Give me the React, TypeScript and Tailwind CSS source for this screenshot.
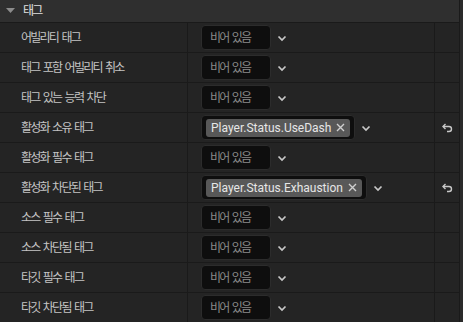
import React from 'react';

const FONT = { fontFamily: 'Roboto, "Noto Sans CJK KR", sans-serif' };

const ROWS: { label: string; tag?: string }[] = [
  { label: '어빌리티 태그' },
  { label: '태그 포함 어빌리티 취소' },
  { label: '태그 있는 능력 차단' },
  { label: '활성화 소유 태그', tag: 'Player.Status.UseDash' },
  { label: '활성화 필수 태그' },
  { label: '활성화 차단된 태그', tag: 'Player.Status.Exhaustion' },
  { label: '소스 필수 태그' },
  { label: '소스 차단됨 태그' },
  { label: '타깃 필수 태그' },
  { label: '타깃 차단됨 태그' },
];

// korean text in the editor is packed tighter than Noto's default advance
const KO = 'text-[12px] tracking-[-1.75px] [word-spacing:2px]';

const Chevron = () => (
  <svg width="10" height="8" viewBox="0 0 10 8" className="shrink-0 text-[#c8c8c8]">
    <path d="M1.5 2.5 L5 6 L8.5 2.5" fill="none" stroke="currentColor" strokeWidth="1.7" />
  </svg>
);

const Cross = () => (
  <svg width="9" height="9" viewBox="0 0 9 9" className="shrink-0 text-[#d0d0d0]">
    <path d="M1 1 L8 8 M8 1 L1 8" fill="none" stroke="currentColor" strokeWidth="1.4" />
  </svg>
);

const Undo = () => (
  <svg width="11" height="10" viewBox="0 0 11 10" className="text-[#c8c8c8]">
    <path d="M3.5 1 L1 3.5 L3.5 6" fill="none" stroke="currentColor" strokeWidth="1.4" />
    <path d="M1.5 3.5 H7 A2.5 2.5 0 0 1 7 8.5 H5" fill="none" stroke="currentColor" strokeWidth="1.4" />
  </svg>
);

const Row: React.FC<{ label: string; tag?: string }> = ({ label, tag }) => (
  <div className="flex h-[30px] border-t border-[#1a1a1a]">
    <div className="flex w-[188px] shrink-0 items-center border-r border-[#1a1a1a] pl-[21px]">
      <span className={`${KO} text-[#c4c4c4]`}>{label}</span>
    </div>
    <div className="flex flex-1 items-center gap-[6px] border-r border-[#1a1a1a] pl-[13px]">
      {tag ? (
        <div className="flex h-[25px] items-center rounded-[4px] border border-[#2c2c2c] bg-[#0e0e0e] px-[4px]">
          <div className="flex h-[18px] items-center gap-[5px] rounded-[3px] bg-[#585858] pl-[5px] pr-[5px]">
            <span className="text-[12px] text-[#e6e6e6]">{tag}</span>
            <Cross />
          </div>
        </div>
      ) : (
        <div className="flex h-[25px] w-[70px] items-center rounded-[4px] border border-[#2c2c2c] bg-[#0e0e0e] pl-[8px]">
          <span className={`${KO} text-[#8a8a8a]`}>비어 있음</span>
        </div>
      )}
      <Chevron />
    </div>
    <div className="flex w-[24px] shrink-0 items-center justify-center">{tag && <Undo />}</div>
  </div>
);

export default function App() {
  return (
    <div className="flex h-[322px] w-[463px] overflow-hidden bg-[#242424]" style={FONT}>
      <div className="flex w-[459px] flex-col">
        <div className="flex h-[22px] shrink-0 items-center gap-[8px] bg-[#2f2f2f] pl-[6px]">
          <svg width="9" height="6" viewBox="0 0 9 6" className="text-[#8c8c8c]">
            <path d="M0 0 H9 L4.5 5 Z" fill="currentColor" />
          </svg>
          <span className={`${KO} text-[#e0e0e0]`}>태그</span>
        </div>
        {ROWS.map((r) => (
          <Row key={r.label} label={r.label} tag={r.tag} />
        ))}
      </div>
      <div className="w-[4px] border-l border-[#1a1a1a] bg-[#2a2a2a]" />
    </div>
  );
}
